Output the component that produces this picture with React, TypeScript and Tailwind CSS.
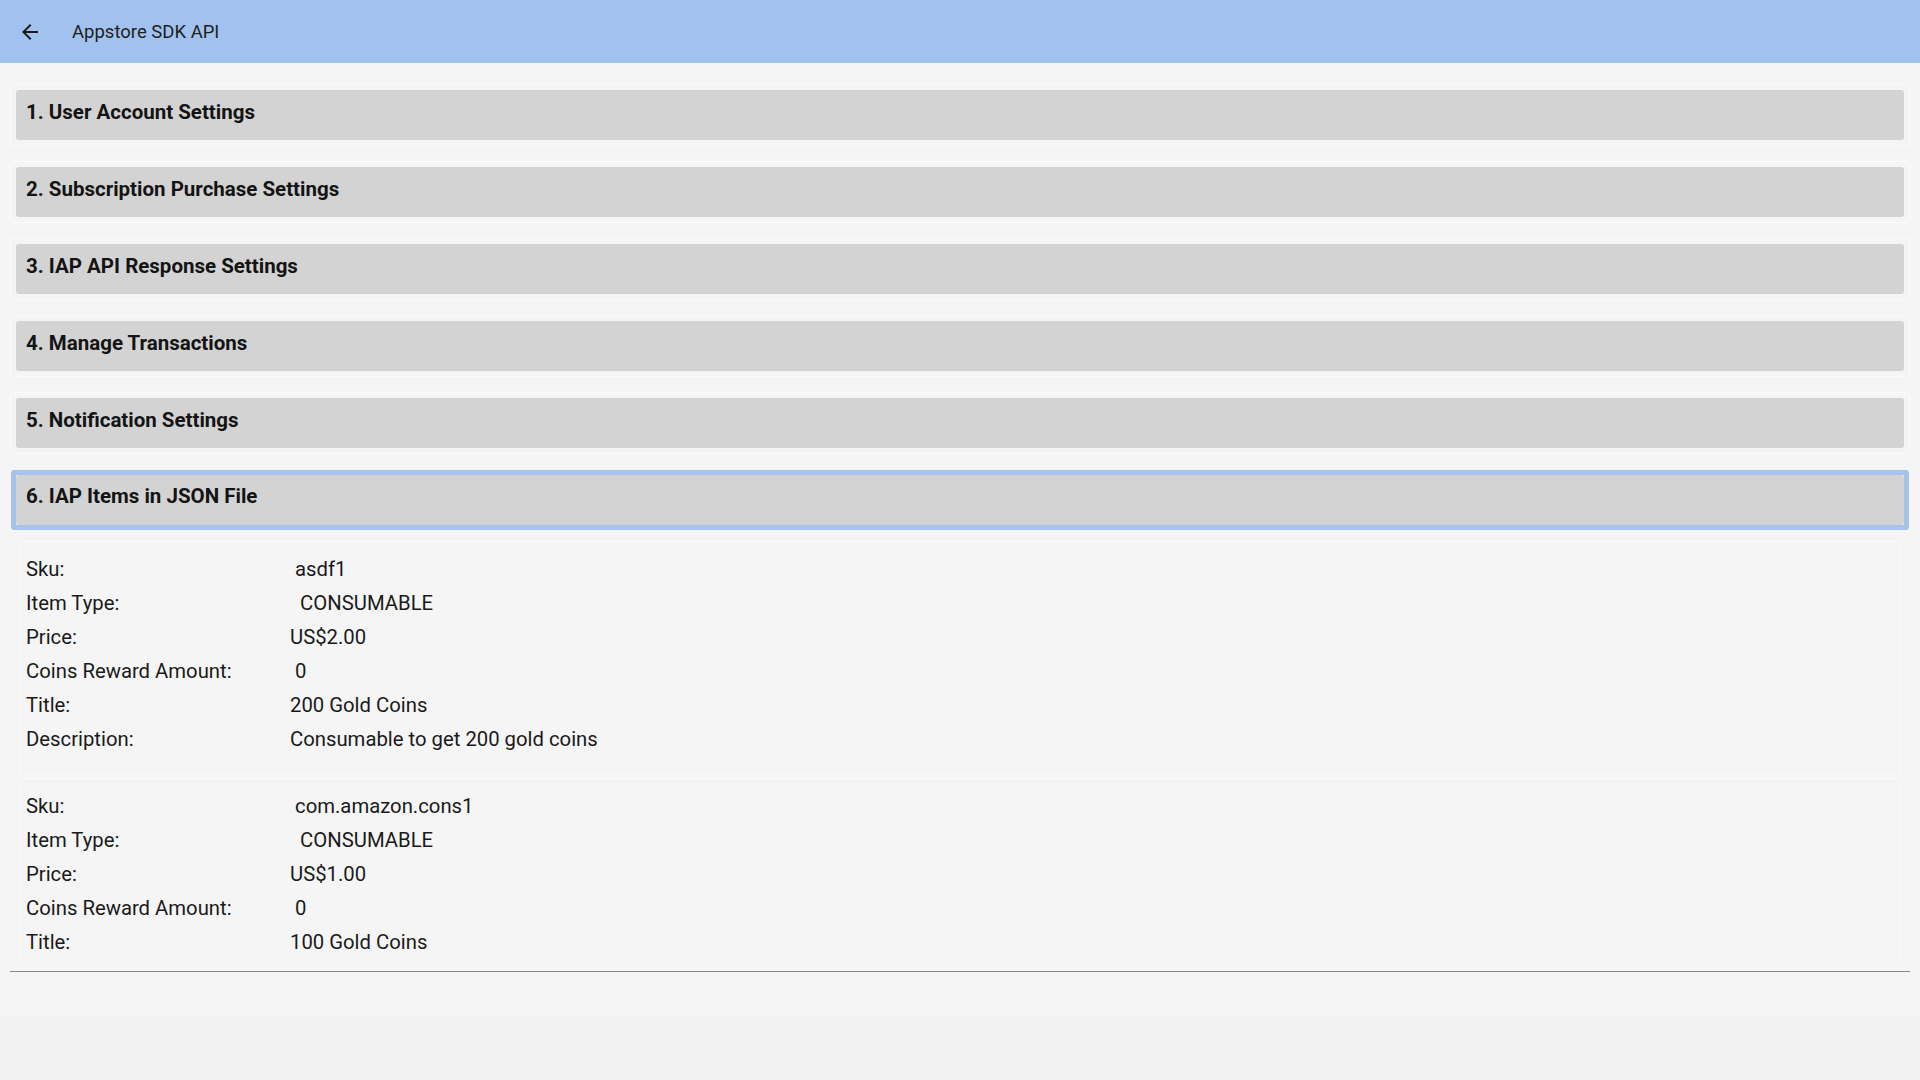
import React from "react";

const sections = [
  "1. User Account Settings",
  "2. Subscription Purchase Settings",
  "3. IAP API Response Settings",
  "4. Manage Transactions",
  "5. Notification Settings",
];

type Row = [string, string];

const items: Row[][] = [
  [
    ["Sku:", " asdf1"],
    ["Item Type:", "  CONSUMABLE"],
    ["Price:", "US$2.00"],
    ["Coins Reward Amount:", " 0"],
    ["Title:", "200 Gold Coins"],
    ["Description:", "Consumable to get 200 gold coins"],
  ],
  [
    ["Sku:", " com.amazon.cons1"],
    ["Item Type:", "  CONSUMABLE"],
    ["Price:", "US$1.00"],
    ["Coins Reward Amount:", " 0"],
    ["Title:", "100 Gold Coins"],
  ],
];

function ArrowBack() {
  return (
    <svg width="24" height="24" viewBox="0 0 24 24" className="shrink-0">
      <path
        d="M20 11H7.83l5.59-5.59L12 4l-8 8 8 8 1.41-1.41L7.83 13H20v-2z"
        fill="#1c1c1c"
      />
    </svg>
  );
}

export default function App() {
  return (
    <div className="min-h-screen bg-[#f2f2f2] font-[Roboto,sans-serif]">
      <header className="h-[63px] bg-[#a1c2ee] flex items-center pl-[18px] pt-[1px]">
        <ArrowBack />
        <span className="ml-[30px] text-[18.5px] leading-[24px] text-[#1e1e1e]">
          Appstore SDK API
        </span>
      </header>

      <main className="bg-[#f5f5f5] pt-[21px] pb-[44px]">
        <div className="flex flex-col gap-[15px] mx-[10px]">
          {sections.map((s) => (
            <div
              key={s}
              className="border border-[#fbfbfb] rounded-[3px] p-[5px]"
            >
              <div className="h-[50px] bg-[#d3d3d3] rounded-[3px] pl-[10px] pt-[10px] text-[20.5px] leading-[24px] font-bold text-[#141414]">
                {s}
              </div>
            </div>
          ))}
          <div className="mt-[1px] mx-[1px] border-[5px] border-[#a6c3ec] rounded-[3px]">
            <div className="h-[50px] bg-[#d3d3d3] rounded-[2px] pl-[10px] pt-[9px] text-[20.5px] leading-[24px] font-bold text-[#141414]">
              6. IAP Items in JSON File
            </div>
          </div>
        </div>

        <div className="mt-[11px] mx-[20px] h-[421px] overflow-hidden flex flex-col gap-[3px]">
          {items.map((rows, i) => (
            <div
              key={i}
              className="shrink-0 border border-[#fbfbfb] rounded-[3px] pl-[5px] pt-[10px] pb-[18px]"
            >
              {rows.map(([label, value]) => (
                <div
                  key={label}
                  className="grid grid-cols-[264px_1fr] text-[20.3px] leading-[34px] text-[#1a1a1a]"
                >
                  <span>{label}</span>
                  <span className="whitespace-pre">{value}</span>
                </div>
              ))}
            </div>
          ))}
        </div>

        <div className="mt-[9px] mx-[10px] h-px bg-[#8a8a8a]" />
      </main>
    </div>
  );
}
